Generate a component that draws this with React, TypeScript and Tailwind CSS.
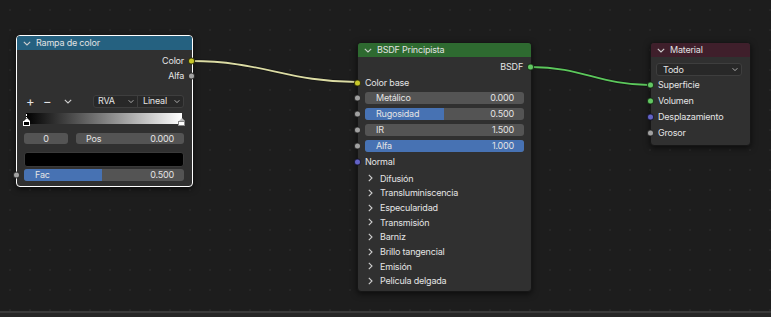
import type { ReactNode } from "react";

const Chevron = ({ dir = "down", className = "" }: { dir?: "down" | "right"; className?: string }) =>
  dir === "down" ? (
    <svg width="8" height="5" viewBox="0 0 8 5" className={className}>
      <path d="M0.8 0.8 L4 4 L7.2 0.8" fill="none" stroke="currentColor" strokeWidth="1.1" />
    </svg>
  ) : (
    <svg width="5" height="8" viewBox="0 0 5 8" className={className}>
      <path d="M0.8 0.8 L4 4 L0.8 7.2" fill="none" stroke="currentColor" strokeWidth="1.1" />
    </svg>
  );

// socket dot, offset is the distance from the row edge out to the node border
const Socket = ({ color, side, offset }: { color: string; side: "in" | "out"; offset: number }) => (
  <span
    className="absolute top-1/2 -translate-y-1/2 w-[7px] h-[7px] rounded-full border border-black/70 z-10"
    style={side === "in" ? { left: -offset - 4, backgroundColor: color } : { right: -offset - 4, backgroundColor: color }}
  />
);

const Node = ({
  left,
  top,
  width,
  height,
  header,
  title,
  selected,
  children,
}: {
  left: number;
  top: number;
  width: number;
  height: number;
  header: string;
  title: string;
  selected?: boolean;
  children: ReactNode;
}) => (
  <div
    className={`absolute rounded-[4px] bg-[#303030] shadow-[0_2px_6px_rgba(0,0,0,0.6)] border ${
      selected ? "border-white" : "border-[#161616]"
    }`}
    style={{ left, top, width, height }}
  >
    <div
      className="flex items-center h-[14px] rounded-t-[3px] pl-[6px] gap-[4px] text-[#e2e2e2]"
      style={{ backgroundColor: header }}
    >
      <Chevron className="text-[#d0d0d0]" />
      <span className="ml-[1px]">{title}</span>
    </div>
    {children}
  </div>
);

const Slider = ({ label, value, fill, h = 12 }: { label: string; value: string; fill: number; h?: number }) => (
  <div className="relative flex items-center justify-between rounded-[3px] bg-[#545454] overflow-hidden" style={{ height: h }}>
    <div className="absolute inset-y-0 left-0 bg-[#4772b3]" style={{ width: `${fill}%` }} />
    <span className="relative pl-[11px]">{label}</span>
    <span className="relative pr-[10px]">{value}</span>
  </div>
);

const Row = ({ children, h, className = "" }: { children: ReactNode; h: number; className?: string }) => (
  <div className={`relative flex items-center ${className}`} style={{ height: h }}>
    {children}
  </div>
);

export default function App() {
  const panels = [
    "Difusión",
    "Transluminiscencia",
    "Especularidad",
    "Transmisión",
    "Barniz",
    "Brillo tangencial",
    "Emisión",
    "Película delgada",
  ];

  return (
    <div className="flex flex-col w-[771px] h-[317px] bg-[#1d1d1d] text-[9px] tracking-[-0.2px] text-[#e4e4e4] font-['Inter','DejaVu_Sans',sans-serif] overflow-hidden">
      <div className="relative flex-1 bg-[radial-gradient(circle,#262626_1px,transparent_1.2px)] bg-[length:20px_20px]">
        <svg className="absolute inset-0" width="771" height="311">
          <path d="M191 61 C 262 61, 288 82, 357 82" fill="none" stroke="#141414" strokeWidth="3.5" />
          <path d="M191 61 C 262 61, 288 82, 357 82" fill="none" stroke="#dcdca4" strokeWidth="1.8" />
          <path d="M531 67 C 582 67, 600 85, 649 85" fill="none" stroke="#141414" strokeWidth="3.5" />
          <path d="M531 67 C 582 67, 600 85, 649 85" fill="none" stroke="#5cc85c" strokeWidth="1.8" />
        </svg>

        {/* Rampa de color */}
        <Node left={16} top={35} width={177} height={152} header="#256180" title="Rampa de color" selected>
          <div className="flex flex-col pt-[4px] pl-[7px] pr-[8px]">
            <Row h={14} className="justify-end">
              Color
              <Socket color="#c7c729" side="out" offset={7} />
            </Row>
            <Row h={15} className="justify-end">
              Alfa
              <Socket color="#a1a1a1" side="out" offset={7} />
            </Row>
            <div className="flex items-center h-[12px] mt-[12px]">
              <span className="w-[17px] pl-[2px] text-[13px] leading-none">+</span>
              <span className="w-[23px] pl-[2px] text-[13px] leading-none">−</span>
              <Chevron className="text-[#d0d0d0]" />
              <div className="ml-auto flex h-[13px] w-[91px] rounded-[3px] border border-[#3e3e3e] bg-[#282828]">
                <div className="flex items-center justify-between w-[44px] pl-[4px] pr-[3px] border-r border-[#3e3e3e]">
                  <span>RVA</span>
                  <Chevron className="text-[#c8c8c8] w-[6px]" />
                </div>
                <div className="flex flex-1 items-center justify-between pl-[5px] pr-[3px]">
                  <span>Lineal</span>
                  <Chevron className="text-[#c8c8c8] w-[6px]" />
                </div>
              </div>
            </div>
            <div className="relative mt-[6px] mx-[2px] h-[11px] bg-[linear-gradient(to_right,#000,#fff)]">
              <div className="absolute left-[-3px] top-[1px] flex flex-col items-center">
                <div className="w-[1px] h-[4px] border-l border-dotted border-white" />
                <div className="w-0 h-0 border-l-[3px] border-r-[3px] border-b-[3px] border-l-transparent border-r-transparent border-b-white" />
                <div className="w-[7px] h-[5px] bg-black border border-white" />
              </div>
              <div className="absolute right-[-3px] top-[5px] flex flex-col items-center">
                <div className="w-0 h-0 border-l-[3px] border-r-[3px] border-b-[3px] border-l-transparent border-r-transparent border-b-[#bbb]" />
                <div className="w-[7px] h-[5px] bg-white border border-[#888]" />
              </div>
            </div>
            <div className="flex gap-[8px] mt-[9px] h-[11px]">
              <div className="flex items-center justify-center w-[44px] rounded-[3px] bg-[#545454]">0</div>
              <div className="flex flex-1 items-center justify-between rounded-[3px] bg-[#545454] pl-[10px] pr-[10px]">
                <span>Pos</span>
                <span>0.000</span>
              </div>
            </div>
            <div className="mt-[8px] h-[15px] rounded-[3px] bg-black border border-[#3a3a3a]" />
            <div className="relative mt-[2px]">
              <Slider label="Fac" value="0.500" fill={48.5} />
              <Socket color="#a1a1a1" side="in" offset={7.5} />
            </div>
          </div>
        </Node>

        {/* BSDF Principista */}
        <Node left={357} top={42} width={175} height={250} header="#2e6a30" title="BSDF Principista">
          <div className="flex flex-col pt-[2px] pl-[7px] pr-[7px]">
            <Row h={16} className="justify-end pr-[1px]">
              BSDF
              <Socket color="#63c763" side="out" offset={6} />
            </Row>
            <Row h={15}>
              <Socket color="#c7c729" side="in" offset={7.5} />
              Color base
            </Row>
            <div className="flex flex-col gap-[4px] mt-[2px]">
              {[
                ["Metálico", "0.000", 0],
                ["Rugosidad", "0.500", 49.4],
                ["IR", "1.500", 0],
                ["Alfa", "1.000", 100],
              ].map(([l, v, f]) => (
                <div key={l as string} className="relative">
                  <Socket color="#a1a1a1" side="in" offset={7.5} />
                  <Slider label={l as string} value={v as string} fill={f as number} />
                </div>
              ))}
            </div>
            <Row h={14} className="mt-[3px]">
              <Socket color="#6363c7" side="in" offset={7.5} />
              Normal
            </Row>
            <div className="flex flex-col mt-[2px]">
              {panels.map((p) => (
                <div key={p} className="flex items-center h-[14.7px] pl-[3px] gap-[7px]">
                  <Chevron dir="right" className="text-[#cfcfcf]" />
                  <span>{p}</span>
                </div>
              ))}
            </div>
          </div>
        </Node>

        {/* Material */}
        <Node left={650} top={42} width={101} height={104} header="#3f1f2b" title="Material">
          <div className="flex flex-col pl-[5px] pr-[8px]">
            <div className="flex items-center justify-between mt-[6px] h-[13px] rounded-[3px] border border-[#3e3e3e] bg-[#282828] pl-[6px] pr-[3px]">
              <span>Todo</span>
              <Chevron className="text-[#c8c8c8] w-[6px]" />
            </div>
            {[
              ["Superficie", "#63c763"],
              ["Volumen", "#63c763"],
              ["Desplazamiento", "#6363c7"],
              ["Grosor", "#a1a1a1"],
            ].map(([l, c], i) => (
              <Row key={l} h={16} className={`pl-[2px] ${i === 0 ? "mt-[1px]" : ""}`}>
                <Socket color={c} side="in" offset={5.5} />
                {l}
              </Row>
            ))}
          </div>
        </Node>
      </div>
      <div className="h-[2px] bg-[#3a3a3a]" />
      <div className="h-[4px] bg-[#262626]" />
    </div>
  );
}
